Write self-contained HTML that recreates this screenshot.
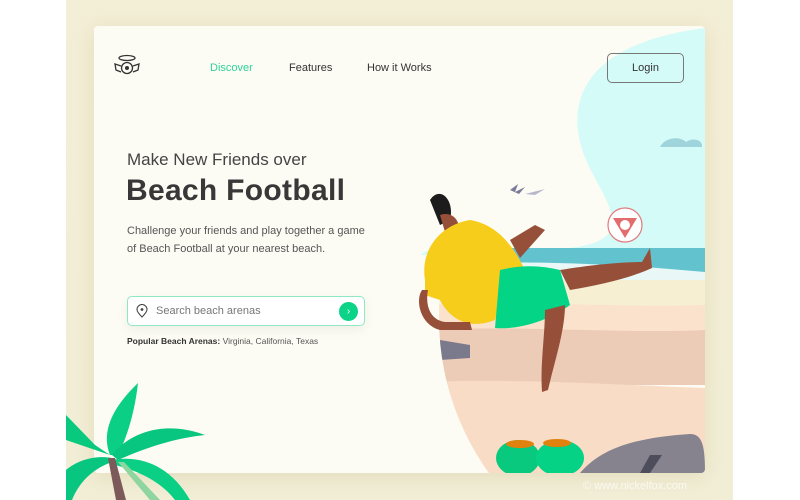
<!DOCTYPE html>
<html><head><meta charset="utf-8"><style>
*{margin:0;padding:0;box-sizing:border-box}
body{width:800px;height:500px;background:#fff;position:relative;overflow:hidden;font-family:"Liberation Sans",sans-serif}
.bg{position:absolute;left:66px;top:0;width:667px;height:500px;background:linear-gradient(#f3eed6,#f2eed6)}
.card{position:absolute;left:94px;top:26px;width:611px;height:447px;background:#fdfcf4;border-radius:4px;box-shadow:0 4px 20px rgba(200,190,140,.35);overflow:hidden}
.t{position:absolute;white-space:nowrap}
</style></head><body>
<div class="bg"></div>
<div class="card">
<svg width="611" height="447" style="position:absolute;left:0;top:0">
<g transform="translate(-94,-26)">
<path d="M705 28 C640 36 585 60 578 110 C572 160 610 190 612 220 C614 245 580 250 520 250 C470 250 440 240 420 255 L705 255 Z" fill="#d5fbf8"/>
<path d="M660 147 C665 137 680 136 686 142 C693 137 703 140 702 147 Z" fill="#9fd4dd"/>
<clipPath id="c"><circle cx="705" cy="318" r="266"/></clipPath>
<g clip-path="url(#c)">
<rect x="420" y="248" width="290" height="30" fill="#62c3cf"/>
<path d="M420 265 C500 260 600 262 705 272 L705 282 L420 282Z" fill="#e9f8f6"/>
<rect x="420" y="280" width="290" height="30" fill="#f6efd2"/>
<path d="M420 305 C520 300 620 308 705 305 L705 340 L420 340Z" fill="#fbe2cd"/>
<path d="M420 330 C520 325 620 334 705 330 L705 385 L420 385Z" fill="#eccbb7"/>
<path d="M420 382 C520 378 620 385 705 388 L705 480 L420 480Z" fill="#f9dcc5"/>
<path d="M440 340 L470 345 L470 358 L440 360Z" fill="#7b7a8c"/>
</g>
<path d="M580 473 C600 450 630 438 690 434 C702 434 705 445 705 473Z" fill="#86838f"/>
<path d="M640 473 L650 455 L662 455 L650 473Z" fill="#4e4d5b"/>
<ellipse cx="518" cy="458" rx="22" ry="18" fill="#09c97f"/>
<ellipse cx="560" cy="458" rx="24" ry="18" fill="#05d285"/>
<ellipse cx="520" cy="444" rx="14" ry="4" fill="#e0820d"/>
<ellipse cx="557" cy="443" rx="14" ry="4" fill="#e0820d"/>
<path d="M510 190 l8 -6 l-3 8 l10 -5 l-6 7 Z" fill="#7a7a9a"/>
<path d="M525 194 l12 -3 l8 -2 l-10 6 Z" fill="#b8b8cc"/>
<circle cx="625" cy="225" r="17" fill="#fff" stroke="#e07a7a" stroke-width="1.2"/>
<path d="M613 218 L637 218 L625 238Z" fill="#e36d6d"/>
<circle cx="625" cy="225" r="5" fill="#fff"/>
<path d="M430 200 C440 185 455 200 450 220 L440 225Z" fill="#1c1c1c"/>
<path d="M440 215 C455 210 462 225 458 235 L445 232Z" fill="#96503a"/>
<path d="M425 280 C420 250 440 225 470 220 C500 225 515 250 525 270 L500 300 L495 320 C470 330 450 320 440 300 L425 295Z" fill="#f7cd1b"/>
<path d="M500 270 C520 265 540 265 560 270 L570 305 C550 320 520 330 495 328 Z" fill="#04d486"/>
<path d="M510 240 L535 225 L545 230 L520 258Z" fill="#96503a"/>
<path d="M560 270 C590 265 620 262 642 262 L650 248 L652 268 C630 278 600 285 570 290Z" fill="#96503a"/>
<path d="M545 310 L565 305 C565 330 555 360 548 390 L542 392 C540 365 545 335 545 310Z" fill="#96503a"/>
<path d="M428 290 C425 305 430 320 445 322 L470 322 L472 330 L440 330 C420 325 415 300 422 290Z" fill="#96503a"/>
</g>
</svg>
<svg style="position:absolute;left:19px;top:27px" width="28" height="22" viewBox="0 0 28 22"><ellipse cx="14" cy="5" rx="8" ry="2.5" fill="none" stroke="#333" stroke-width="1.3"/><circle cx="14" cy="15" r="5.5" fill="none" stroke="#333" stroke-width="1.3"/><path d="M8 13 L2 11 L3 17 L8 19 M20 13 L26 11 L25 17 L20 19" fill="none" stroke="#333" stroke-width="1.3"/><circle cx="14" cy="15" r="2" fill="#333"/></svg>
<div class="t" style="left:116px;top:36px;font-size:11px;color:#2ed39a">Discover</div>
<div class="t" style="left:195px;top:36px;font-size:11px;color:#333">Features</div>
<div class="t" style="left:273px;top:36px;font-size:11px;color:#333">How it Works</div>
<div class="t" style="left:513px;top:27px;width:77px;height:30px;border:1px solid #777;border-radius:5px;font-size:11px;color:#333;text-align:center;line-height:28px">Login</div>
<div class="t" style="left:33px;top:124px;font-size:17px;color:#444">Make New Friends over</div>
<div class="t" style="left:32px;top:148px;font-size:30px;font-weight:bold;color:#383838;letter-spacing:0.3px">Beach Football</div>
<div class="t" style="left:33px;top:197px;font-size:11px;color:#555;line-height:17.5px">Challenge your friends and play together a game<br>of Beach Football at your nearest beach.</div>
<div class="t" style="left:33px;top:270px;width:238px;height:30px;border:1px solid #8ee9c2;border-radius:5px;background:#fff;box-shadow:0 4px 12px rgba(0,0,0,.06)">
<svg style="position:absolute;left:8px;top:7px" width="12" height="14" viewBox="0 0 12 14"><path d="M6 13 C2 9 1 7 1 5.5 A5 5 0 0 1 11 5.5 C11 7 10 9 6 13Z" fill="none" stroke="#444" stroke-width="1.1"/><circle cx="6" cy="5.5" r="1.4" fill="#444"/></svg>
<div class="t" style="left:28px;top:8px;font-size:11px;color:#777">Search beach arenas</div>
<div class="t" style="left:211px;top:5px;width:19px;height:19px;border-radius:50%;background:#0bd488;color:#fff;font-size:10px;text-align:center;line-height:19px">›</div>
</div>
<div class="t" style="left:33px;top:310px;font-size:8.5px;color:#555"><b style="color:#333">Popular Beach Arenas:</b> Virginia, California, Texas</div>
</div>
<svg width="800" height="500" style="position:absolute;left:0;top:0">
<path d="M66 415 L95 445 L110 455 L66 440Z" fill="#09c97f"/>
<path d="M110 455 C100 430 115 405 138 383 C135 410 128 435 118 455Z" fill="#0ccf86"/>
<path d="M112 455 C130 432 165 420 205 435 C175 438 145 448 118 460Z" fill="#08c57f"/>
<path d="M112 460 C140 455 170 465 190 500 L175 500 C160 480 135 470 115 465Z" fill="#0ccf86"/>
<path d="M112 458 C95 455 78 460 66 470 L66 500 L72 500 C80 480 95 468 112 462Z" fill="#08c57f"/>
<path d="M108 458 L116 500 L126 500 L115 458Z" fill="#7d5a5a"/>
<path d="M118 462 L150 500 L160 500 L124 462Z" fill="#8ed5a0"/>
</svg>
<div class="t" style="left:583px;top:480px;font-size:11px;color:rgba(255,255,255,.7)">© www.nickelfox.com</div>
</body></html>
